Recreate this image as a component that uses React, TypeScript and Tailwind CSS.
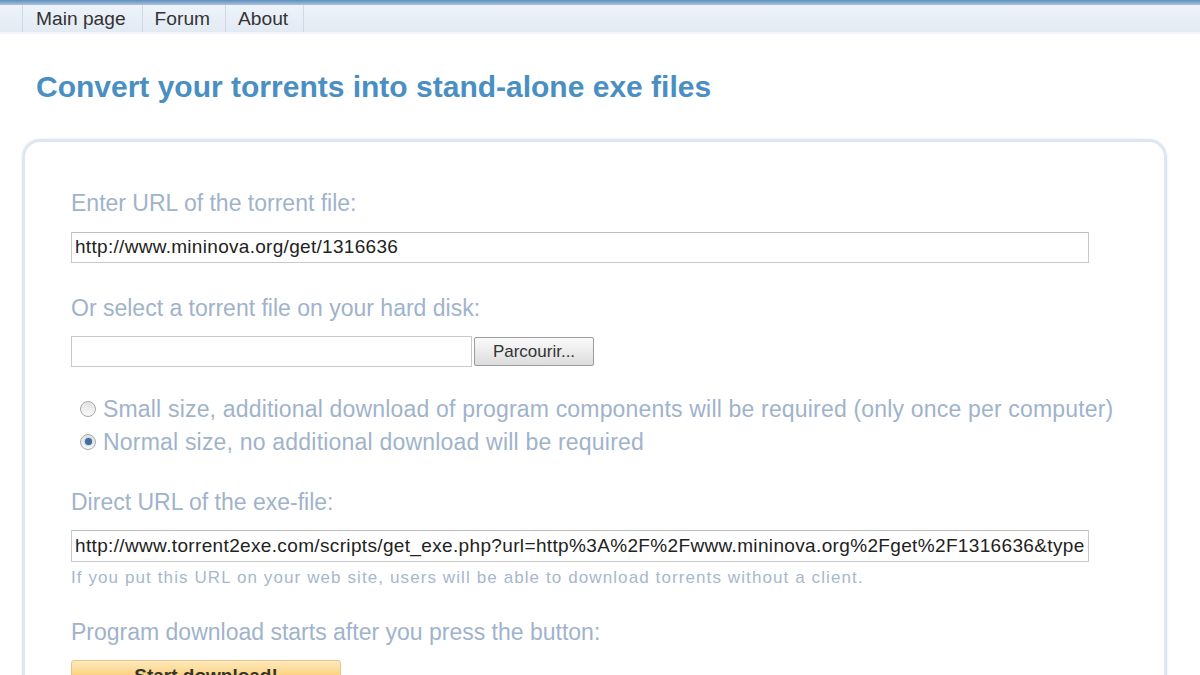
import React from "react";

function Radio({ checked }: { checked?: boolean }) {
  return (
    <span className="inline-flex items-center justify-center w-[16px] h-[16px] rounded-full border border-[#a9a9a9] bg-gradient-to-b from-[#e2e2e2] to-[#f8f8f8] mr-[7px] shrink-0">
      {checked && <span className="w-[7px] h-[7px] rounded-full bg-[#3f6f9f] shadow-[0_0_2px_#6f9fd0]" />}
    </span>
  );
}

export default function App() {
  const label = "text-[#9fb3cb] text-[23px] leading-[26px]";
  return (
    <div className="w-[1200px] h-[675px] overflow-hidden bg-white" style={{ fontFamily: '"Liberation Sans", Arial, sans-serif' }}>
      <div className="h-[5px] bg-gradient-to-b from-[#5f8fbd] to-[#a8c3dc]" />
      <div className="h-[29px] bg-gradient-to-b from-[#eef3f9] to-[#e2eaf4] border-b-[2px] border-[#f3f6fa] flex items-stretch pl-[22px]">
        {["Main page", "Forum", "About"].map((t, i) => (
          <div key={t} className={`flex items-center border-l border-[#cfd9e5] pt-[2px] ${i === 0 ? "pl-[13px] pr-[16px]" : "pl-[12px] pr-[15px]"} text-[19.2px] text-[#333]`}>
            {t}
          </div>
        ))}
        <div className="border-l border-[#cfd9e5]" />
      </div>

      <h1 className="mt-[36px] ml-[36px] text-[30px] leading-[34px] font-bold text-[#4a8fc2]">
        Convert your torrents into stand-alone exe files
      </h1>

      <div className="mt-[35px] ml-[22px] w-[1145px] h-[600px] rounded-[18px] border-[3px] border-[#dde6f2] shadow-[0_0_3px_#e6edf6] pl-[46px] pt-[48px]">
        <div className={label}>Enter URL of the torrent file:</div>
        <div className="mt-[16px] w-[1018px] h-[31px] border border-[#c9c9c9] border-t-[#bdbdbd] flex items-center px-[3px] text-[19px] text-[#222] tracking-[0.3px]">
          http://www.mininova.org/get/1316636
        </div>

        <div className={`${label} mt-[32px]`}>Or select a torrent file on your hard disk:</div>
        <div className="mt-[15px] flex items-center">
          <div className="w-[401px] h-[31px] border border-[#c9c9c9]" />
          <div className="ml-[2px] w-[120px] h-[29px] border border-[#9c9c9c] rounded-[2px] bg-gradient-to-b from-[#fbfbfb] to-[#dcdcdc] flex items-center justify-center text-[17px] text-[#333]">
            Parcourir...
          </div>
        </div>

        <div className="mt-[25px] ml-[9px]">
          <div className={`${label} flex items-center h-[33px] tracking-[0.18px]`}>
            <Radio />
            Small size, additional download of program components will be required (only once per computer)
          </div>
          <div className={`${label} flex items-center h-[33px] tracking-[0.2px]`}>
            <Radio checked />
            Normal size, no additional download will be required
          </div>
        </div>

        <div className={`${label} mt-[31px]`}>Direct URL of the exe-file:</div>
        <div className="mt-[15px] w-[1018px] h-[32px] border border-[#c9c9c9] border-t-[#bdbdbd] flex items-center px-[3px] text-[19px] text-[#222] overflow-hidden whitespace-nowrap tracking-[0.35px]">
          http://www.torrent2exe.com/scripts/get_exe.php?url=http%3A%2F%2Fwww.mininova.org%2Fget%2F1316636&type
        </div>
        <div className="mt-[6px] text-[17px] leading-[20px] text-[#a6b8ce] tracking-[1.1px]">
          If you put this URL on your web site, users will be able to download torrents without a client.
        </div>

        <div className={`${label} mt-[31px]`}>Program download starts after you press the button:</div>
        <div className="mt-[15px] w-[270px] h-[32px] rounded-[3px] border border-[#eac58a] bg-gradient-to-b from-[#fde9bd] via-[#fbd17d] to-[#f7be55] flex items-center justify-center text-[19px] font-bold text-[#333]">
          Start download!
        </div>
      </div>
    </div>
  );
}
